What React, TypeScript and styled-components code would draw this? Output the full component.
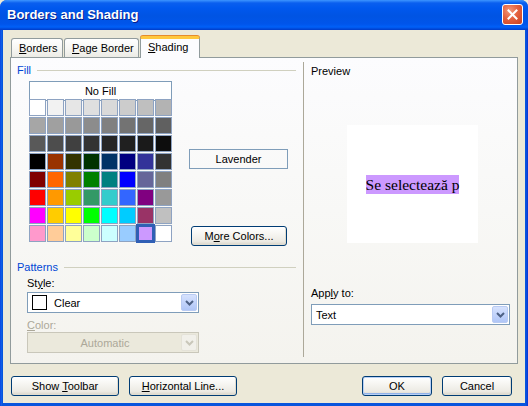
import React from 'react';
import styled, { createGlobalStyle } from 'styled-components';

const GlobalStyle = createGlobalStyle`
  html, body {
    margin: 0;
    padding: 0;
    width: 528px;
    height: 406px;
    overflow: hidden;
    background: #ece9d8;
  }
  * { box-sizing: border-box; }
  body {
    font-family: "Liberation Sans", Arial, sans-serif;
    font-size: 11px;
    color: #000;
  }
`;

const GRAYS = [
  '#ffffff', '#f2f2f2', '#e6e6e6', '#dfdfdf', '#d9d9d9', '#cccccc', '#bfbfbf', '#b3b3b3',
  '#a6a6a6', '#a0a0a0', '#999999', '#8c8c8c', '#808080', '#737373', '#666666', '#606060',
  '#595959', '#4d4d4d', '#404040', '#333333', '#262626', '#202020', '#1a1a1a', '#0d0d0d',
];

const COLORS = [
  '#000000', '#993300', '#333300', '#003300', '#003366', '#000080', '#333399', '#333333',
  '#800000', '#ff6600', '#808000', '#008000', '#008080', '#0000ff', '#666699', '#808080',
  '#ff0000', '#ff9900', '#99cc00', '#339966', '#33cccc', '#3366ff', '#800080', '#999999',
  '#ff00ff', '#ffcc00', '#ffff00', '#00ff00', '#00ffff', '#00ccff', '#993366', '#c0c0c0',
  '#ff99cc', '#ffcc99', '#ffff99', '#ccffcc', '#ccffff', '#99ccff', '#cc99ff', '#ffffff',
];

const PALETTE = [...GRAYS, ...COLORS];
const SELECTED = 62;

const Window = styled.div`
  width: 528px;
  height: 406px;
  display: flex;
  flex-direction: column;
  background: linear-gradient(90deg, #0831d9 0, #166aee 1px, #0855dd 2px, #0855dd 526px, #0831d9 528px);
  border-radius: 7px 7px 0 0;
  overflow: hidden;
`;

const TitleBar = styled.div`
  height: 30px;
  flex-shrink: 0;
  display: flex;
  align-items: center;
  justify-content: space-between;
  padding: 0 5px 0 7px;
  background: linear-gradient(180deg, #3d95ff 0, #0a5fef 3px, #0058ee 8px, #0054e3 16px, #0055eb 24px, #0060f8 27px, #0047d8 29px, #003cc8 30px);
`;

const Title = styled.span`
  font-family: "Liberation Sans", Arial, sans-serif;
  font-weight: bold;
  font-size: 13px;
  color: #fff;
  text-shadow: 1px 1px 0 #0a1e8a;
  margin-top: -1px;
`;

const CloseButton = styled.div`
  width: 21px;
  height: 21px;
  border: 1px solid #fff;
  border-radius: 3px;
  background: radial-gradient(circle at 35% 30%, #f3987a 0, #e4623f 45%, #c8401f 100%);
  display: flex;
  align-items: center;
  justify-content: center;
  margin-top: -1px;
`;

const Body = styled.div`
  flex: 1;
  margin: 0 3px 3px;
  background: #ece9d8;
  display: flex;
  flex-direction: column;
  padding: 6px 7px 7px 7px;
`;

const TabStrip = styled.div`
  display: flex;
  align-items: flex-end;
  padding-left: 1px;
  height: 21px;
  position: relative;
  z-index: 1;
`;

const Tab = styled.div<{ $active?: boolean; $w: number }>`
  width: ${p => p.$w}px;
  height: ${p => (p.$active ? 22 : 19)}px;
  margin-right: ${p => (p.$active ? 0 : 1)}px;
  margin-bottom: ${p => (p.$active ? -1 : 0)}px;
  border: 1px solid #919b9c;
  border-bottom: none;
  border-top: ${p => (p.$active ? '3px solid #ffc83c' : '1px solid #919b9c')};
  border-radius: 3px 3px 0 0;
  background: ${p => (p.$active ? '#fcfcfe' : 'linear-gradient(180deg, #ffffff 0, #f7f7f4 50%, #ecebe5 100%)')};
  padding: ${p => (p.$active ? '2px' : '3px')} 0 0 7px;
  line-height: 13px;
  box-shadow: ${p => (p.$active ? 'inset 0 -1px 0 #fcfcfe, 0 -1px 0 #e68b2c' : 'none')};
`;

const Panel = styled.div`
  height: 307px;
  border: 1px solid #919b9c;
  background: linear-gradient(180deg, #fcfcfe 0, #f8f8f6 50%, #f4f3ee 100%);
  display: flex;
`;

const LeftCol = styled.div`
  width: 292px;
  padding: 6px 7px 0 6px;
  display: flex;
  flex-direction: column;
`;

const Divider = styled.div`
  width: 1px;
  margin: 4px 0 6px;
  background: #aca899;
`;

const RightCol = styled.div`
  flex: 1;
  padding: 7px 7px 0 7px;
  display: flex;
  flex-direction: column;
`;

const Legend = styled.div<{ $top?: number }>`
  display: flex;
  align-items: center;
  gap: 6px;
  line-height: 13px;
  color: #0046d5;
  margin-top: ${p => p.$top ?? 0}px;
  &::after {
    content: '';
    flex: 1;
    height: 1px;
    background: #d0d0bf;
  }
`;

const FillBody = styled.div`
  display: flex;
  padding-left: 12px;
  margin-top: 4px;
`;

const Grid = styled.div`
  display: grid;
  grid-template-columns: repeat(8, 17px);
  grid-auto-rows: 17px;
  gap: 1px;
`;

const NoFill = styled.div`
  grid-column: 1 / -1;
  height: 20px;
  border: 1px solid #7f9db9;
  background: #fff;
  display: flex;
  align-items: center;
  justify-content: center;
`;

const Cell = styled.div<{ $color: string; $selected?: boolean }>`
  background: ${p => p.$color};
  border: ${p => (p.$selected ? '2px solid #2f5fb5' : '1px solid #8ea3c2')};
  box-shadow: ${p => (p.$selected ? '0 0 0 1px #2f5fb5' : 'none')};
`;

const Side = styled.div`
  width: 99px;
  margin-left: 17px;
  display: flex;
  flex-direction: column;
`;

const ColorName = styled.div`
  height: 20px;
  margin-top: 68px;
  border: 1px solid #7f9db9;
  display: flex;
  align-items: center;
  justify-content: center;
`;

const Button = styled.div<{ $w: number; $default?: boolean }>`
  width: ${p => p.$w}px;
  height: 20px;
  border: 1px solid #003c74;
  border-radius: 3px;
  background: linear-gradient(180deg, #ffffff 0, #f6f5f1 40%, #eceae3 80%, #d8d3c8 100%);
  box-shadow: ${p => (p.$default ? 'inset 0 0 0 1px #b8d0f5, inset 0 -1px 0 1px #90b2ea' : 'inset -1px -1px 0 #e0dccf')};
  display: flex;
  align-items: center;
  justify-content: center;
  flex-shrink: 0;
  white-space: pre;
`;

const MoreColors = styled(Button)`
  margin: 57px 0 0 2px;
`;

const Key = styled.span`
  text-decoration: underline;
  text-underline-offset: 1px;
`;

const PatternsBody = styled.div`
  padding-left: 10px;
  display: flex;
  flex-direction: column;
`;

const Label = styled.div<{ $top: number; $disabled?: boolean }>`
  line-height: 13px;
  margin-top: ${p => p.$top}px;
  color: ${p => (p.$disabled ? '#aca899' : '#000')};
`;

const Combo = styled.div<{ $w: number; $top: number; $disabled?: boolean }>`
  width: ${p => p.$w}px;
  height: 21px;
  margin-top: ${p => p.$top}px;
  border: 1px solid ${p => (p.$disabled ? '#c9c7ba' : '#7f9db9')};
  background: ${p => (p.$disabled ? '#ebe9dc' : '#fff')};
  display: flex;
  align-items: center;
  padding: 1px;
`;

const ComboValue = styled.div<{ $center?: boolean; $disabled?: boolean }>`
  flex: 1;
  display: flex;
  align-items: center;
  justify-content: ${p => (p.$center ? 'center' : 'flex-start')};
  padding-left: ${p => (p.$center ? 0 : 3)}px;
  color: ${p => (p.$disabled ? '#aca899' : '#000')};
  gap: 7px;
`;

const Swatch = styled.div`
  width: 15px;
  height: 15px;
  border: 1px solid #000;
  background: #fff;
`;

const ArrowBox = styled.div<{ $disabled?: boolean }>`
  width: 16px;
  height: 17px;
  border-radius: 2px;
  border: 1px solid ${p => (p.$disabled ? '#e4e2d8' : '#b9cbf3')};
  background: ${p => (p.$disabled ? '#f1f0ea' : 'linear-gradient(180deg, #d6e2fd 0, #c3d4fb 50%, #b0c6f7 100%)')};
  display: flex;
  align-items: center;
  justify-content: center;
`;

const PreviewBox = styled.div`
  width: 131px;
  height: 118px;
  margin: 47px 0 0 36px;
  background: #fff;
  display: flex;
  align-items: center;
  justify-content: center;
`;

const Sample = styled.span`
  font-family: "Liberation Serif", "Times New Roman", serif;
  font-size: 15.5px;
  line-height: 19px;
  background: #cc99ff;
  white-space: nowrap;
`;

const ButtonRow = styled.div`
  display: flex;
  gap: 10px;
  margin-top: 12px;
  padding: 0 6px 0 1px;
`;

const Spacer = styled.div`
  flex: 1;
`;

const Chevron = ({ disabled }: { disabled?: boolean }) => (
  <svg width={9} height={6} viewBox="0 0 9 6">
    <polyline points="1,1 4.5,4.5 8,1" fill="none" stroke={disabled ? '#c9c7ba' : '#4d6185'} strokeWidth={2} />
  </svg>
);

export default function App() {
  return (
    <>
      <GlobalStyle />
      <Window>
        <TitleBar>
          <Title>Borders and Shading</Title>
          <CloseButton>
            <svg width={11} height={11} viewBox="0 0 11 11">
              <path d="M1.5 1.5 L9.5 9.5 M9.5 1.5 L1.5 9.5" stroke="#fff" strokeWidth={2} strokeLinecap="square" />
            </svg>
          </CloseButton>
        </TitleBar>
        <Body>
          <TabStrip>
            <Tab $w={52}><Key>B</Key>orders</Tab>
            <Tab $w={75}><Key>P</Key>age Border</Tab>
            <Tab $w={60} $active><Key>S</Key>hading</Tab>
          </TabStrip>
          <Panel>
            <LeftCol>
              <Legend>Fill</Legend>
              <FillBody>
                <Grid>
                  <NoFill>No Fill</NoFill>
                  {PALETTE.map((c, i) => (
                    <Cell key={i} $color={c} $selected={i === SELECTED} />
                  ))}
                </Grid>
                <Side>
                  <ColorName>Lavender</ColorName>
                  <MoreColors $w={96}><span>M<Key>o</Key>re Colors...</span></MoreColors>
                </Side>
              </FillBody>
              <Legend $top={15}>Patterns</Legend>
              <PatternsBody>
                <Label $top={3}>St<Key>y</Key>le:</Label>
                <Combo $w={172} $top={2}>
                  <ComboValue>
                    <Swatch />
                    Clear
                  </ComboValue>
                  <ArrowBox><Chevron /></ArrowBox>
                </Combo>
                <Label $top={6} $disabled><Key>C</Key>olor:</Label>
                <Combo $w={172} $top={0} $disabled>
                  <ComboValue $center $disabled>Automatic</ComboValue>
                  <ArrowBox $disabled><Chevron disabled /></ArrowBox>
                </Combo>
              </PatternsBody>
            </LeftCol>
            <Divider />
            <RightCol>
              <Label $top={0}>Preview</Label>
              <PreviewBox>
                <Sample>Se selectează p</Sample>
              </PreviewBox>
              <Label $top={44}>App<Key>l</Key>y to:</Label>
              <Combo $w={199} $top={4}>
                <ComboValue>Text</ComboValue>
                <ArrowBox><Chevron /></ArrowBox>
              </Combo>
            </RightCol>
          </Panel>
          <ButtonRow>
            <Button $w={108}><span>Show <Key>T</Key>oolbar</span></Button>
            <Button $w={108}><span><Key>H</Key>orizontal Line...</span></Button>
            <Spacer />
            <Button $w={70} $default>OK</Button>
            <Button $w={70}>Cancel</Button>
          </ButtonRow>
        </Body>
      </Window>
    </>
  );
}
